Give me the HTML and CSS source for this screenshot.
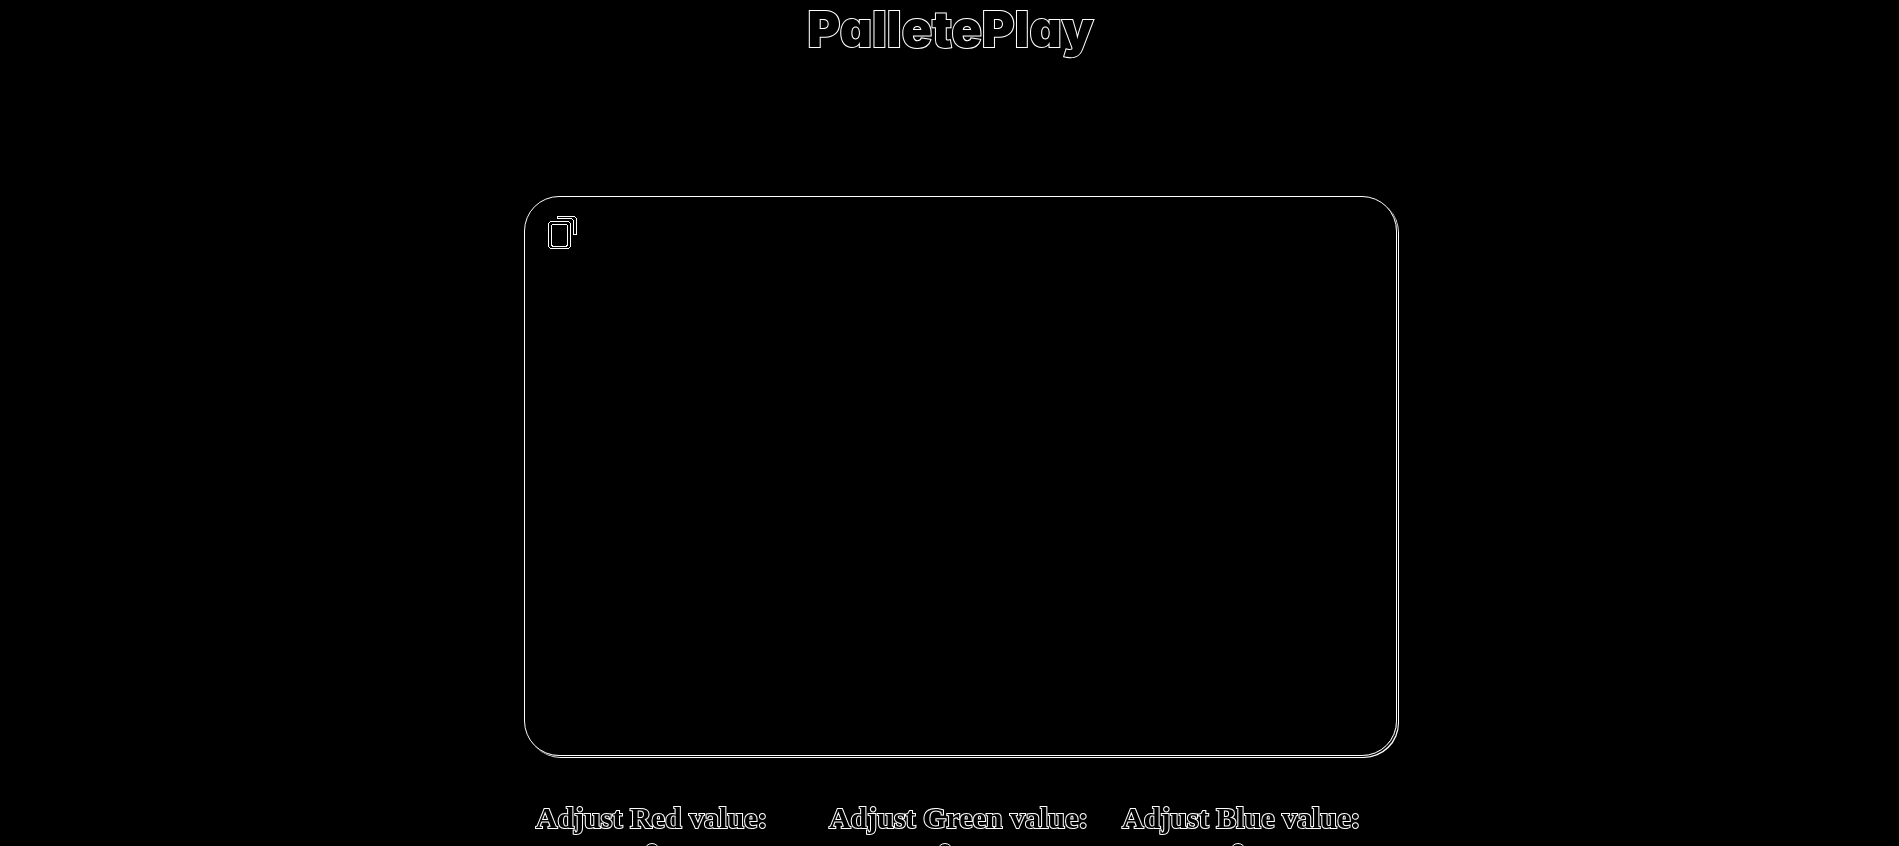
FILE: index.html
```html
<!DOCTYPE html>
<html lang="en">
<head>
<meta charset="utf-8">
<title>PalletePlay</title>
<link rel="stylesheet" href="styles.css">
</head>
<body>
<h1 class="title">PalletePlay</h1>
<main class="mixer">
  <section class="swatch">
    <button class="copy" type="button" aria-label="Copy colour">
      <svg width="30" height="34" viewBox="0 0 30 34" shape-rendering="crispEdges">
        <path d="M2.500 5.500h18l2 2v23l-2 2h-18l-2-2v-23z"/>
        <path d="M4.500 8.500h14l1 1v19l-1 2h-14l-1-2v-19z"/>
        <path d="M9.500 0.500h17l2 2v16h-3v-14l-2-2h-14z"/>
      </svg>
    </button>
  </section>
  <form class="controls">
    <div class="channel">
      <label class="label" for="red">Adjust Red value:</label>
      <input class="slider" id="red" type="range" min="0" max="255">
    </div>
    <div class="channel">
      <label class="label" for="green">Adjust Green value:</label>
      <input class="slider" id="green" type="range" min="0" max="255">
    </div>
    <div class="channel">
      <label class="label" for="blue">Adjust Blue value:</label>
      <input class="slider" id="blue" type="range" min="0" max="255">
    </div>
  </form>
</main>
</body>
</html>
```
FILE: styles.css
```css
html {
  height: 100%;
  overflow: hidden;
}

body {
  margin: 0;
  background: #000;
  color: #000;
}

.title {
  margin: 0 0 138px;
  padding-left: 2px;
  font: 900 50px/58px Inter, "Open Sans", sans-serif;
  font-feature-settings: "cv11";
  text-align: center;
  -webkit-text-stroke: 2px #fff;
  paint-order: stroke fill;
  will-change: opacity;
}

.mixer {
  width: 46%;
  margin: 0 auto;
  padding-left: 22px;
}

.swatch {
  box-sizing: border-box;
  height: 560px;
  padding: 19px 23px;
  border: 1px solid #fff;
  border-radius: 35px;
  box-shadow: 1px 1px 0 #000, 2px 2px 0 #fff;
}

.copy {
  display: block;
  padding: 0;
  border: 0;
  background: none;
}

.copy svg {
  display: block;
  fill: none;
  stroke: #fff;
}

.controls {
  display: grid;
  grid-template-columns: repeat(3, 1fr);
  padding: 44px 0 0 12px;
  margin-right: -18px;
}

.channel {
  display: flex;
  flex-direction: column;
  gap: 7px;
  will-change: opacity;
}

.label {
  font: 700 30px/36px "Liberation Serif", serif;
  white-space: nowrap;
  -webkit-text-stroke: 2px #fff;
  paint-order: stroke fill;
}

.slider {
  appearance: none;
  width: 231px;
  height: 16px;
  margin: 0;
  background: none;
}

.slider::-webkit-slider-thumb {
  appearance: none;
  box-sizing: border-box;
  width: 16px;
  height: 16px;
  border: 1px solid #fff;
  border-radius: 50%;
  background: #000;
}
```
